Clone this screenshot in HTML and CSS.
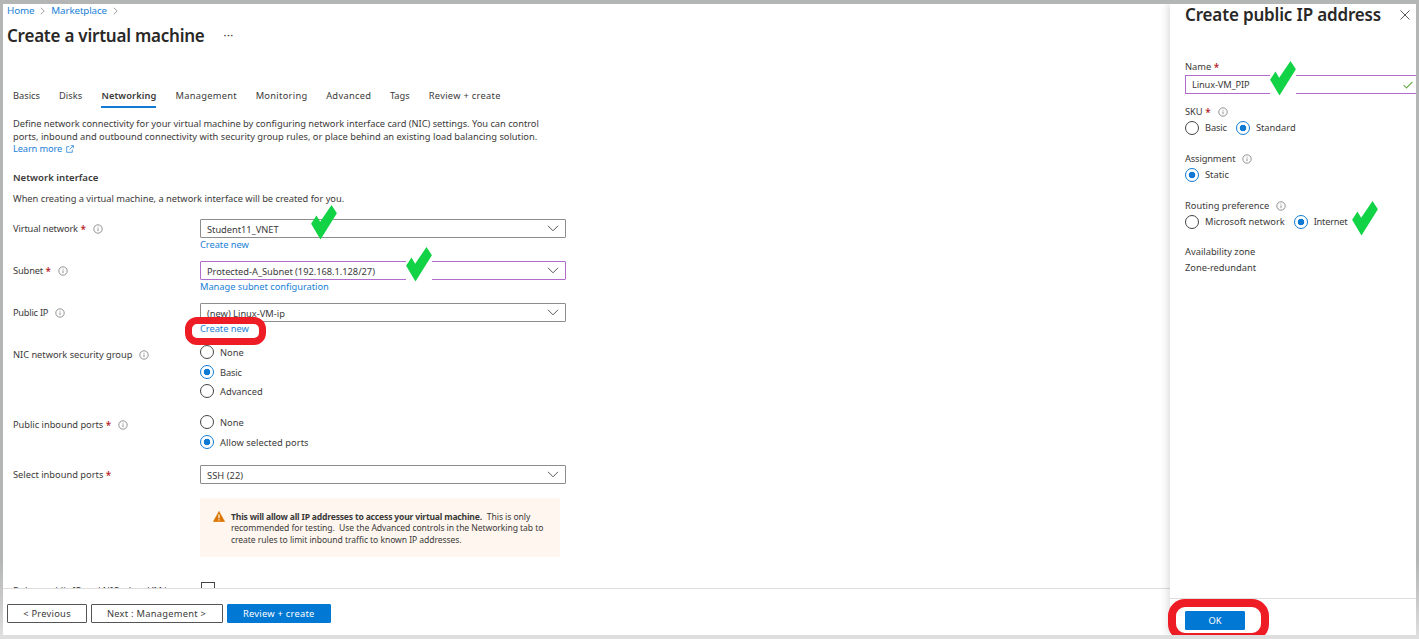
FILE: index.html
```html
<!DOCTYPE html>
<html lang="en">
<head>
<meta charset="utf-8">
<title>Create a virtual machine</title>
<link rel="stylesheet" href="styles.css">
</head>
<body>
<svg class="defs" width="0" height="0">
  <symbol id="info" viewBox="0 0 10 10"><circle cx="5" cy="5" r="4.2" fill="none" stroke="#777" stroke-width=".8"/><path d="M5 4.4v2.8M5 2.7v.9" stroke="#777" stroke-width=".8"/></symbol>
  <symbol id="chev" viewBox="0 0 12 7"><path d="M1 .8l5 5 5-5" fill="none" stroke="#555" stroke-width="1"/></symbol>
  <symbol id="tick" viewBox="0 0 77 103"><path d="M0 56L16 31 27 50 61 0 77 25 28 103z" fill="#12d246"/></symbol>
  <symbol id="sep" viewBox="0 0 5 8"><path d="M.8.8L4.200 4 .8 7.2" fill="none" stroke="#888" stroke-width=".8"/></symbol>
</svg>
<div class="window">
  <main class="main">
    <nav class="crumbs"><a>Home</a><svg><use href="#sep"/></svg><a>Marketplace</a><svg><use href="#sep"/></svg></nav>
    <h1 class="title"><span>Create a virtual machine</span><i class="more">···</i></h1>
    <div class="tabs">
      <span>Basics</span><span>Disks</span><span class="active">Networking</span><span class="wide">Management</span><span class="wide">Monitoring</span><span class="wide">Advanced</span><span>Tags</span><span class="wide">Review + create</span>
    </div>
    <div class="body">
      <p class="intro"><span class="snug">Define network connectivity for your virtual machine by configuring network interface card (NIC) settings. You can control</span><br>ports, inbound and outbound connectivity with security group rules, or place behind an existing load balancing solution.<br><a class="tight">Learn more</a><svg class="ext" viewBox="0 0 8 8"><path d="M3.400 1.700H.7v5.600h5.600V4.600M4.700.6h2.700v2.700M7.300.7L3.500 4.500" fill="none" stroke="#2b88d8" stroke-width=".8"/></svg></p>
      <h2 class="sub">Network interface</h2>
      <p class="desc">When creating a virtual machine, a network interface will be created for you.</p>
      <div class="row">
        <label class="label"><span class="tight">Virtual network</span><b>*</b><svg><use href="#info"/></svg></label>
        <div class="field"><div class="select"><span class="snug">Student11_VNET</span><svg><use href="#chev"/></svg></div><a class="under">Create new</a></div>
      </div>
      <div class="row">
        <label class="label"><span class="tight">Subnet</span><b>*</b><svg><use href="#info"/></svg></label>
        <div class="field"><div class="select edited"><span class="snug">Protected-A_Subnet (192.168.1.128/27)</span><svg><use href="#chev"/></svg></div><a class="under">Manage subnet configuration</a></div>
      </div>
      <div class="row">
        <label class="label"><span class="tighter">Public IP</span><svg><use href="#info"/></svg></label>
        <div class="field"><div class="select"><span>(new) Linux-VM-ip</span><svg><use href="#chev"/></svg></div><a class="under">Create new</a></div>
      </div>
      <div class="row nic">
        <label class="label"><span class="snug">NIC network security group</span><svg><use href="#info"/></svg></label>
        <div class="field radios"><div class="radio"><i></i><span>None</span></div><div class="radio on"><i></i><span class="tight">Basic</span></div><div class="radio"><i></i><span>Advanced</span></div></div>
      </div>
      <div class="row ports">
        <label class="label"><span class="snug">Public inbound ports</span><b>*</b><svg><use href="#info"/></svg></label>
        <div class="field radios"><div class="radio"><i></i><span>None</span></div><div class="radio on"><i></i><span class="loose">Allow selected ports</span></div></div>
      </div>
      <div class="row inbound">
        <label class="label"><span>Select inbound ports</span><b>*</b></label>
        <div class="field"><div class="select"><span class="loose">SSH (22)</span><svg><use href="#chev"/></svg></div></div>
      </div>
      <div class="warning">
        <svg viewBox="0 0 12 11"><path d="M6 .3L11.800 10.700H.2z" fill="#db7500" stroke="#db7500" stroke-width=".4" stroke-linejoin="round"/><path d="M6 3.500v3.700M6 8.200v1.300" stroke="#fff" stroke-width="1.200"/></svg>
        <p><strong>This will allow all IP addresses to access your virtual machine.</strong><span class="gap">This is only</span><br>recommended for testing.&nbsp; Use the Advanced controls in the Networking tab to<br>create rules to limit inbound traffic to known IP addresses.</p>
      </div>
      <div class="row cleanup"><label class="label">Delete public IP and NIC when VM is</label><i class="box"></i></div>
    </div>
    <footer class="actions"><button class="b1">&lt; Previous</button><button class="b2">Next : Management &gt;</button><button class="b3 primary">Review + create</button></footer>
  </main>
  <aside class="panel">
    <header class="phead"><h1>Create public IP address</h1><svg viewBox="0 0 10 10"><path d="M.5.5l9 9M9.500.5l-9 9" stroke="#444" stroke-width=".9"/></svg></header>
    <div class="pbody">
      <div class="label name"><span>Name</span><b>*</b></div>
      <div class="input"><span class="tight">Linux-VM_PIP</span><svg viewBox="0 0 10 8"><path d="M.7 4.200L3.500 7 9.300 1" fill="none" stroke="#6bb04a" stroke-width="1.100"/></svg></div>
      <div class="label psku"><span>SKU</span><b>*</b><svg><use href="#info"/></svg></div>
      <div class="choices"><div class="radio"><i></i><span class="tight">Basic</span></div><div class="radio on"><i></i><span>Standard</span></div></div>
      <div class="label next"><span class="tight">Assignment</span><svg><use href="#info"/></svg></div>
      <div class="choices"><div class="radio on"><i></i><span>Static</span></div></div>
      <div class="label next"><span>Routing preference</span><svg><use href="#info"/></svg></div>
      <div class="choices"><div class="radio"><i></i><span>Microsoft network</span></div><div class="radio on"><i></i><span class="tighter">Internet</span></div></div>
      <div class="zone">Availability zone<br>Zone-redundant</div>
    </div>
    <footer class="pfoot"><button class="primary ok">OK</button></footer>
  </aside>
  <svg class="mark m1"><use href="#tick"/></svg>
  <svg class="mark m2 solid"><use href="#tick"/></svg>
  <svg class="mark m3 solid"><use href="#tick"/></svg>
  <svg class="mark m4"><use href="#tick"/></svg>
  <div class="ring r1"></div>
  <div class="ring r2"></div>
</div>
</body>
</html>
```
FILE: styles.css
```css
* { box-sizing: border-box; margin: 0; }
body {
  width: 1419px; height: 639px; overflow: hidden;
  background: linear-gradient(#b4b5b5 0 560px, #c9c9c9 600px, #dedede 635px);
  font: 9.3px/12.6px "Noto Sans", sans-serif; color: #3b3a39;
}
i { font-style: normal; }
.snug { letter-spacing: -.03px; }
.tight { letter-spacing: -.14px; }
.tighter { letter-spacing: -.26px; }
.loose { letter-spacing: .06px; }
.defs { position: absolute; }
.window {
  position: relative; display: flex; width: 1413px; height: 631px;
  margin: 4px 3px 0; background: #fff; overflow: hidden;
}
.main { width: 1167px; display: flex; flex-direction: column; }
a { color: #1a7fd6; }
.crumbs { height: 13px; padding: 1px 0 0 4px; display: flex; align-items: center; font-size: 9.8px; letter-spacing: -.13px; }
.crumbs svg { width: 5px; height: 8px; margin: 0 6px 0; }
.title { height: 37px; padding: 1px 0 0 4px; display: flex; align-items: center; font-size: 17px; font-weight: 600; line-height: 24px; color: #292827; letter-spacing: -.23px; }
.more { margin: -2px 0 0 19px; font-size: 11px; font-weight: 400; letter-spacing: .4px; }
.tabs { display: flex; gap: 19px; height: 54px; padding-left: 10px; align-items: flex-end; margin-bottom: 10px; }
.tabs span { height: 20px; line-height: 15px; white-space: nowrap; }
.tabs .wide { letter-spacing: .29px; margin-right: -.3px; }
.tabs .active { margin-left: .4px; border-bottom: 2px solid #0f7ad4; font-weight: 600; letter-spacing: .1px; }
.body { flex: 1; min-height: 0; overflow: hidden; padding-left: 10px; }
.intro { height: 53px; white-space: nowrap; }
.ext { width: 8px; height: 8px; margin-left: 4px; vertical-align: -1px; }
.sub { font-size: 9.6px; font-weight: 600; line-height: 13px; width: max-content; }
.desc { height: 35px; padding-top: 9px; letter-spacing: -.02px; }
.row { display: flex; height: 42px; }
.label { display: flex; align-items: center; width: 187px; height: 20px; white-space: nowrap; }
.label b { color: #b5161c; margin-left: 2.500px; font-size: 10px; font-weight: 500; }
.label svg { width: 10px; height: 10px; margin-left: 7px; }
.field { width: 365.5px; }
.select {
  display: flex; align-items: center; justify-content: space-between;
  height: 19px; padding: 2px 5.500px 0 6px; border: 1px solid #8f8d8b; border-radius: 1px;
}
.select span { padding-top: 1.500px; }
.select svg { width: 12px; height: 7px; margin-top: -2px; }
.edited { border-color: #b06cca; }
.under { display: block; width: max-content; line-height: 13px; letter-spacing: -.03px; }
.radio { display: flex; align-items: center; height: 19.5px; }
.radio i { width: 14px; height: 14px; border: 1px solid #444; border-radius: 50%; margin-right: 6px; }
.radio span { padding-top: 1px; }
.radio.on i { border-color: #0f7ad4; background: radial-gradient(circle, #0f7ad4 3px, transparent 3.6px); }
.radios { margin-top: -2.5px; }
.radios .radio i { margin-left: .4px; margin-right: 5.600px; }
.radios .radio span { padding-top: 2.500px; }
.nic { height: 70px; }
.ports { height: 50px; }
.inbound { height: 33px; }
.warning { display: flex; width: 360px; height: 59px; margin-left: 187px; padding: 13px 13px; background: #fff6ef; font-size: 8.6px; line-height: 11.4px; letter-spacing: -.08px; white-space: nowrap; }
.warning p { padding-top: 1px; }
.warning strong { letter-spacing: -.2px; }
.warning svg { width: 12px; height: 11px; margin-right: 6px; }
.gap { margin-left: 5px; }
.cleanup { margin-top: 25px; }
.cleanup .label { height: 18px; padding-top: 1px; }
.box { width: 14px; height: 14px; margin-left: 1px; border: 1px solid #444; }
.actions { display: flex; gap: 4px; height: 47px; padding: 15px 4px; border-top: 1px solid #dedede; letter-spacing: .27px; }
button { height: 19px; padding: 1px 0 0; border: 1px solid #555; border-radius: 1px; background: #fff; font: inherit; color: inherit; letter-spacing: inherit; }
.b1 { width: 80px; } .b2 { width: 132px; padding-right: 1px; } .b3 { width: 103.5px; }
.primary { background: #0078d4; border-color: #0078d4; color: #fff; }
.panel { width: 246px; display: flex; flex-direction: column; background: #fff; box-shadow: -2px 0 8px rgba(0,0,0,.15); }
.phead { display: flex; align-items: center; padding: 0 6px 0 15px; height: 22px; justify-content: space-between; }
.phead h1 { font-size: 17px; font-weight: 600; line-height: 22px; white-space: nowrap; letter-spacing: -.16px; color: #292827; }
.phead svg { width: 10px; height: 10px; margin-top: -1px; }
.pbody { flex: 1; padding: 34px 0 0 15px; }
.panel .label { height: 13px; }
.panel .name { padding-top: 1.500px; }
.panel .psku { margin-top: 11.500px; }
.panel .next { margin-top: 16px; }
.input { display: flex; align-items: center; justify-content: space-between; height: 19px; margin-top: 2px; padding: 1px 3px 0 6px; border: 1px solid #b06cca; border-right: 0; }
.input svg { width: 10px; height: 8px; }
.choices { display: flex; gap: 9px; height: 18px; align-items: center; }
.zone { margin-top: 13.5px; line-height: 15.6px; }
.pfoot { height: 37px; padding: 12px 15px; border-top: 1px solid #dedede; }
.ok { width: 60px; }
.mark { position: absolute; width: 26px; height: 34.5px; }
.solid { background: #fff; }
.m1 { left: 308px; top: 201px; } .m2 { left: 403px; top: 243px; } .m3 { left: 1267px; top: 57px; } .m4 { left: 1349px; top: 197px; }
.ring { position: absolute; border: 7px solid #ee1c25; }
.r1 { left: 182px; top: 313px; width: 81px; height: 28px; border-radius: 12px; }
.r2 { left: 1165px; top: 595px; width: 101px; height: 42px; border-radius: 17px; border-width: 8px; }
```
